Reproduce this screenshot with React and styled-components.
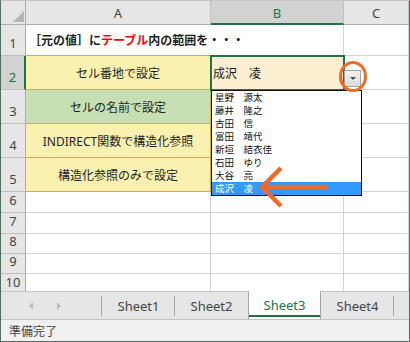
import React from "react";
import styled, { createGlobalStyle } from "styled-components";

const GREEN = "#217346";
const GOLD = "#d4b02c";
const GRID = "#d4d4d4";
const HEAD_LINE = "#ababab";
const ORANGE = "#ef6a25";

const GlobalStyle = createGlobalStyle`
  html, body {
    margin: 0;
    padding: 0;
    background: #fff;
  }
  body {
    font-family: "Noto Sans", "Noto Sans CJK JP", sans-serif;
  }
`;

const Window = styled.div`
  width: 410px;
  height: 342px;
  box-sizing: border-box;
  border: 1px solid #52705e;
  border-top-color: #c4c4c4;
  display: flex;
  flex-direction: column;
  overflow: hidden;
  background: #fff;
`;

const Sheet = styled.div`
  position: relative;
  flex: none;
  height: 290px;
  display: grid;
  grid-template-columns: 25px 185px 133px 65px;
  grid-template-rows: 24px 31px 34px 34px 34px 34px 21px 21px 20px 20px 21px;
  overflow: hidden;
  background: #fff;
`;

const Corner = styled.div`
  box-sizing: border-box;
  display: flex;
  align-items: flex-end;
  justify-content: flex-end;
  padding: 0 1px 2px 0;
  background: #e6e6e6;
  border-right: 1px solid ${HEAD_LINE};
  border-bottom: 1px solid ${HEAD_LINE};
`;

const CornerMark = styled.div`
  width: 0;
  height: 0;
  border-left: 11px solid transparent;
  border-bottom: 11px solid #b4b4b4;
`;

const ColHead = styled.div`
  box-sizing: border-box;
  display: flex;
  align-items: center;
  justify-content: center;
  padding-top: 1px;
  background: ${({ $selected }) => ($selected ? "#d2d2d2" : "#e6e6e6")};
  color: ${({ $selected }) => ($selected ? GREEN : "#444")};
  font-size: 13px;
  border-right: 1px solid #c0c0c0;
  border-bottom: ${({ $selected }) => ($selected ? `2px solid ${GREEN}` : `1px solid ${HEAD_LINE}`)};
`;

const RowHead = styled.div`
  box-sizing: border-box;
  display: flex;
  align-items: flex-end;
  justify-content: center;
  padding-bottom: 4px;
  line-height: 15px;
  background: ${({ $selected }) => ($selected ? "#d2d2d2" : "#e6e6e6")};
  color: ${({ $selected }) => ($selected ? GREEN : "#444")};
  font-size: 13px;
  border-right: ${({ $selected }) => ($selected ? `2px solid ${GREEN}` : `1px solid ${HEAD_LINE}`)};
  border-bottom: 1px solid #c0c0c0;
`;

const Cell = styled.div`
  box-sizing: border-box;
  position: relative;
  display: flex;
  align-items: center;
  justify-content: ${({ $center }) => ($center ? "center" : "flex-start")};
  padding: 0 ${({ $pad }) => $pad ?? 3}px;
  background: ${({ $fill }) => $fill || "transparent"};
  border-right: 1px solid ${({ $right }) => $right || GRID};
  border-bottom: 1px solid ${({ $bottom }) => $bottom || GRID};
  font-size: 12px;
  font-weight: ${({ $bold }) => ($bold ? 700 : 400)};
  color: #1f1f1f;
  white-space: nowrap;
  ${({ $selected }) =>
    $selected &&
    `
    z-index: 2;
    outline: 2px solid ${GREEN};
    outline-offset: -1px;
  `}
`;

const Red = styled.span`
  color: #ff0000;
`;

const DropButton = styled.div`
  position: absolute;
  left: 343px;
  top: 69px;
  width: 17px;
  height: 17px;
  box-sizing: border-box;
  border: 1px solid #a3a3a3;
  background: linear-gradient(#f2f2f2, #dcdcdc);
  display: flex;
  align-items: center;
  justify-content: center;
  z-index: 3;

  &::before {
    content: "";
    width: 0;
    height: 0;
    border-left: 3px solid transparent;
    border-right: 3px solid transparent;
    border-top: 3px solid #505050;
  }
`;

const ListBox = styled.div`
  position: absolute;
  left: 210px;
  top: 89px;
  width: 151px;
  box-sizing: border-box;
  border: 1px solid #111;
  background: #fff;
  z-index: 3;
`;

const ListItem = styled.div`
  height: 13px;
  line-height: 13px;
  padding-left: 3px;
  font-family: "Noto Sans CJK JP", sans-serif;
  font-size: 9.5px;
  white-space: pre;
  background: ${({ $active }) => ($active ? "#3399ff" : "transparent")};
  color: ${({ $active }) => ($active ? "#fff" : "#111")};
`;

const Mark = styled.svg`
  position: absolute;
  left: ${({ $x }) => $x}px;
  top: ${({ $y }) => $y}px;
  z-index: 4;
  overflow: visible;
`;

const TabBar = styled.div`
  flex: none;
  height: 29px;
  box-sizing: border-box;
  display: flex;
  border-top: 1px solid #c6c6c6;
  border-bottom: 1px solid #c6c6c6;
  background: #e6e6e6;
`;

const Nav = styled.div`
  position: relative;
  width: 101px;
  display: flex;
  align-items: center;
  gap: 24px;
  padding-left: 28px;
  box-sizing: border-box;

  &::after {
    content: "";
    position: absolute;
    right: 0;
    top: 4px;
    bottom: 3px;
    width: 1px;
    background: #a6a6a6;
  }
`;

const NavArrow = styled.span`
  width: 0;
  height: 0;
  border-top: 4px solid transparent;
  border-bottom: 4px solid transparent;
  ${({ $dir }) => ($dir === "left" ? "border-right" : "border-left")}: 4px solid #bdbdbd;
`;

const Tab = styled.div`
  position: relative;
  width: 73px;
  box-sizing: border-box;
  display: flex;
  align-items: center;
  justify-content: center;
  font-size: 13px;
  color: ${({ $active }) => ($active ? GREEN : "#444")};
  background: ${({ $active }) => ($active ? "#fff" : "transparent")};
  margin-top: ${({ $active }) => ($active ? "-1px" : "0")};
  border-left: ${({ $active }) => ($active ? "1px solid #a6a6a6" : "none")};
  border-right: ${({ $active }) => ($active ? "1px solid #a6a6a6" : "none")};

  &::after {
    content: "";
    position: absolute;
    ${({ $active, $sep }) =>
      $active
        ? `left: 0; right: 0; bottom: 2px; height: 2px; background: ${GREEN};`
        : $sep
        ? "right: 0; top: 4px; bottom: 3px; width: 1px; background: #a6a6a6;"
        : "display: none;"}
  }
`;

const StatusBar = styled.div`
  flex: 1;
  display: flex;
  align-items: center;
  padding-left: 8px;
  background: #f0f0f0;
  font-family: "Noto Sans CJK JP", sans-serif;
  font-size: 12px;
  color: #444;
`;

const YELLOW = "#faf0b0";
const LEAF = "#c6e0b4";

const rows = [
  { a: <>［元の値］に<Red>テーブル</Red>内の範囲を・・・</>, bold: true, bottom: GOLD, right: "transparent" },
  { a: "セル番地で設定", fill: YELLOW, center: true, bottom: GOLD, right: GOLD, selected: true },
  { a: "セルの名前で設定", fill: LEAF, center: true, bottom: GOLD, right: GOLD },
  { a: "INDIRECT関数で構造化参照", fill: YELLOW, center: true, bottom: GOLD, right: GOLD },
  { a: "構造化参照のみで設定", fill: YELLOW, center: true, bottom: GOLD, right: GOLD },
  {},
  {},
  {},
  {},
  {},
];

const names = ["星野　源太", "藤井　隆之", "古田　信", "富田　靖代", "新垣　結衣佳", "石田　ゆり", "大谷　亮", "成沢　凌"];

export default function App() {
  return (
    <>
      <GlobalStyle />
      <Window>
        <Sheet>
          <Corner>
            <CornerMark />
          </Corner>
          <ColHead>A</ColHead>
          <ColHead $selected>B</ColHead>
          <ColHead>C</ColHead>

          {rows.map((r, i) => (
            <React.Fragment key={i}>
              <RowHead $selected={r.selected}>{i + 1}</RowHead>
              <Cell $fill={r.fill} $center={r.center} $bold={r.bold} $bottom={r.bottom} $right={r.right} style={r.bold ? { zIndex: 1 } : undefined}>
                {r.a}
              </Cell>
              {r.selected ? (
                <Cell $selected $fill="#fdedd1" $pad={2}>
                  成沢　凌
                </Cell>
              ) : (
                <Cell />
              )}
              <Cell />
            </React.Fragment>
          ))}

          <DropButton />
          <ListBox>
            {names.map((n, i) => (
              <ListItem key={n} $active={i === names.length - 1}>
                {n}
              </ListItem>
            ))}
          </ListBox>

          <Mark $x={335} $y={58} width="34" height="36" viewBox="0 0 34 36">
            <ellipse cx="17" cy="17.5" rx="12.5" ry="14" fill="none" stroke={ORANGE} strokeWidth="3" />
          </Mark>
          <Mark $x={257} $y={163} width="72" height="46" viewBox="0 0 72 46">
            <path d="M6 23 H69" stroke={ORANGE} strokeWidth="4.5" fill="none" />
            <path d="M23 4 L4 23 L23 42" stroke={ORANGE} strokeWidth="4.5" fill="none" strokeLinejoin="miter" />
          </Mark>
        </Sheet>

        <TabBar>
          <Nav>
            <NavArrow $dir="left" />
            <NavArrow $dir="right" />
          </Nav>
          <Tab $sep>Sheet1</Tab>
          <Tab>Sheet2</Tab>
          <Tab $active>Sheet3</Tab>
          <Tab $sep>Sheet4</Tab>
        </TabBar>
        <StatusBar>準備完了</StatusBar>
      </Window>
    </>
  );
}
